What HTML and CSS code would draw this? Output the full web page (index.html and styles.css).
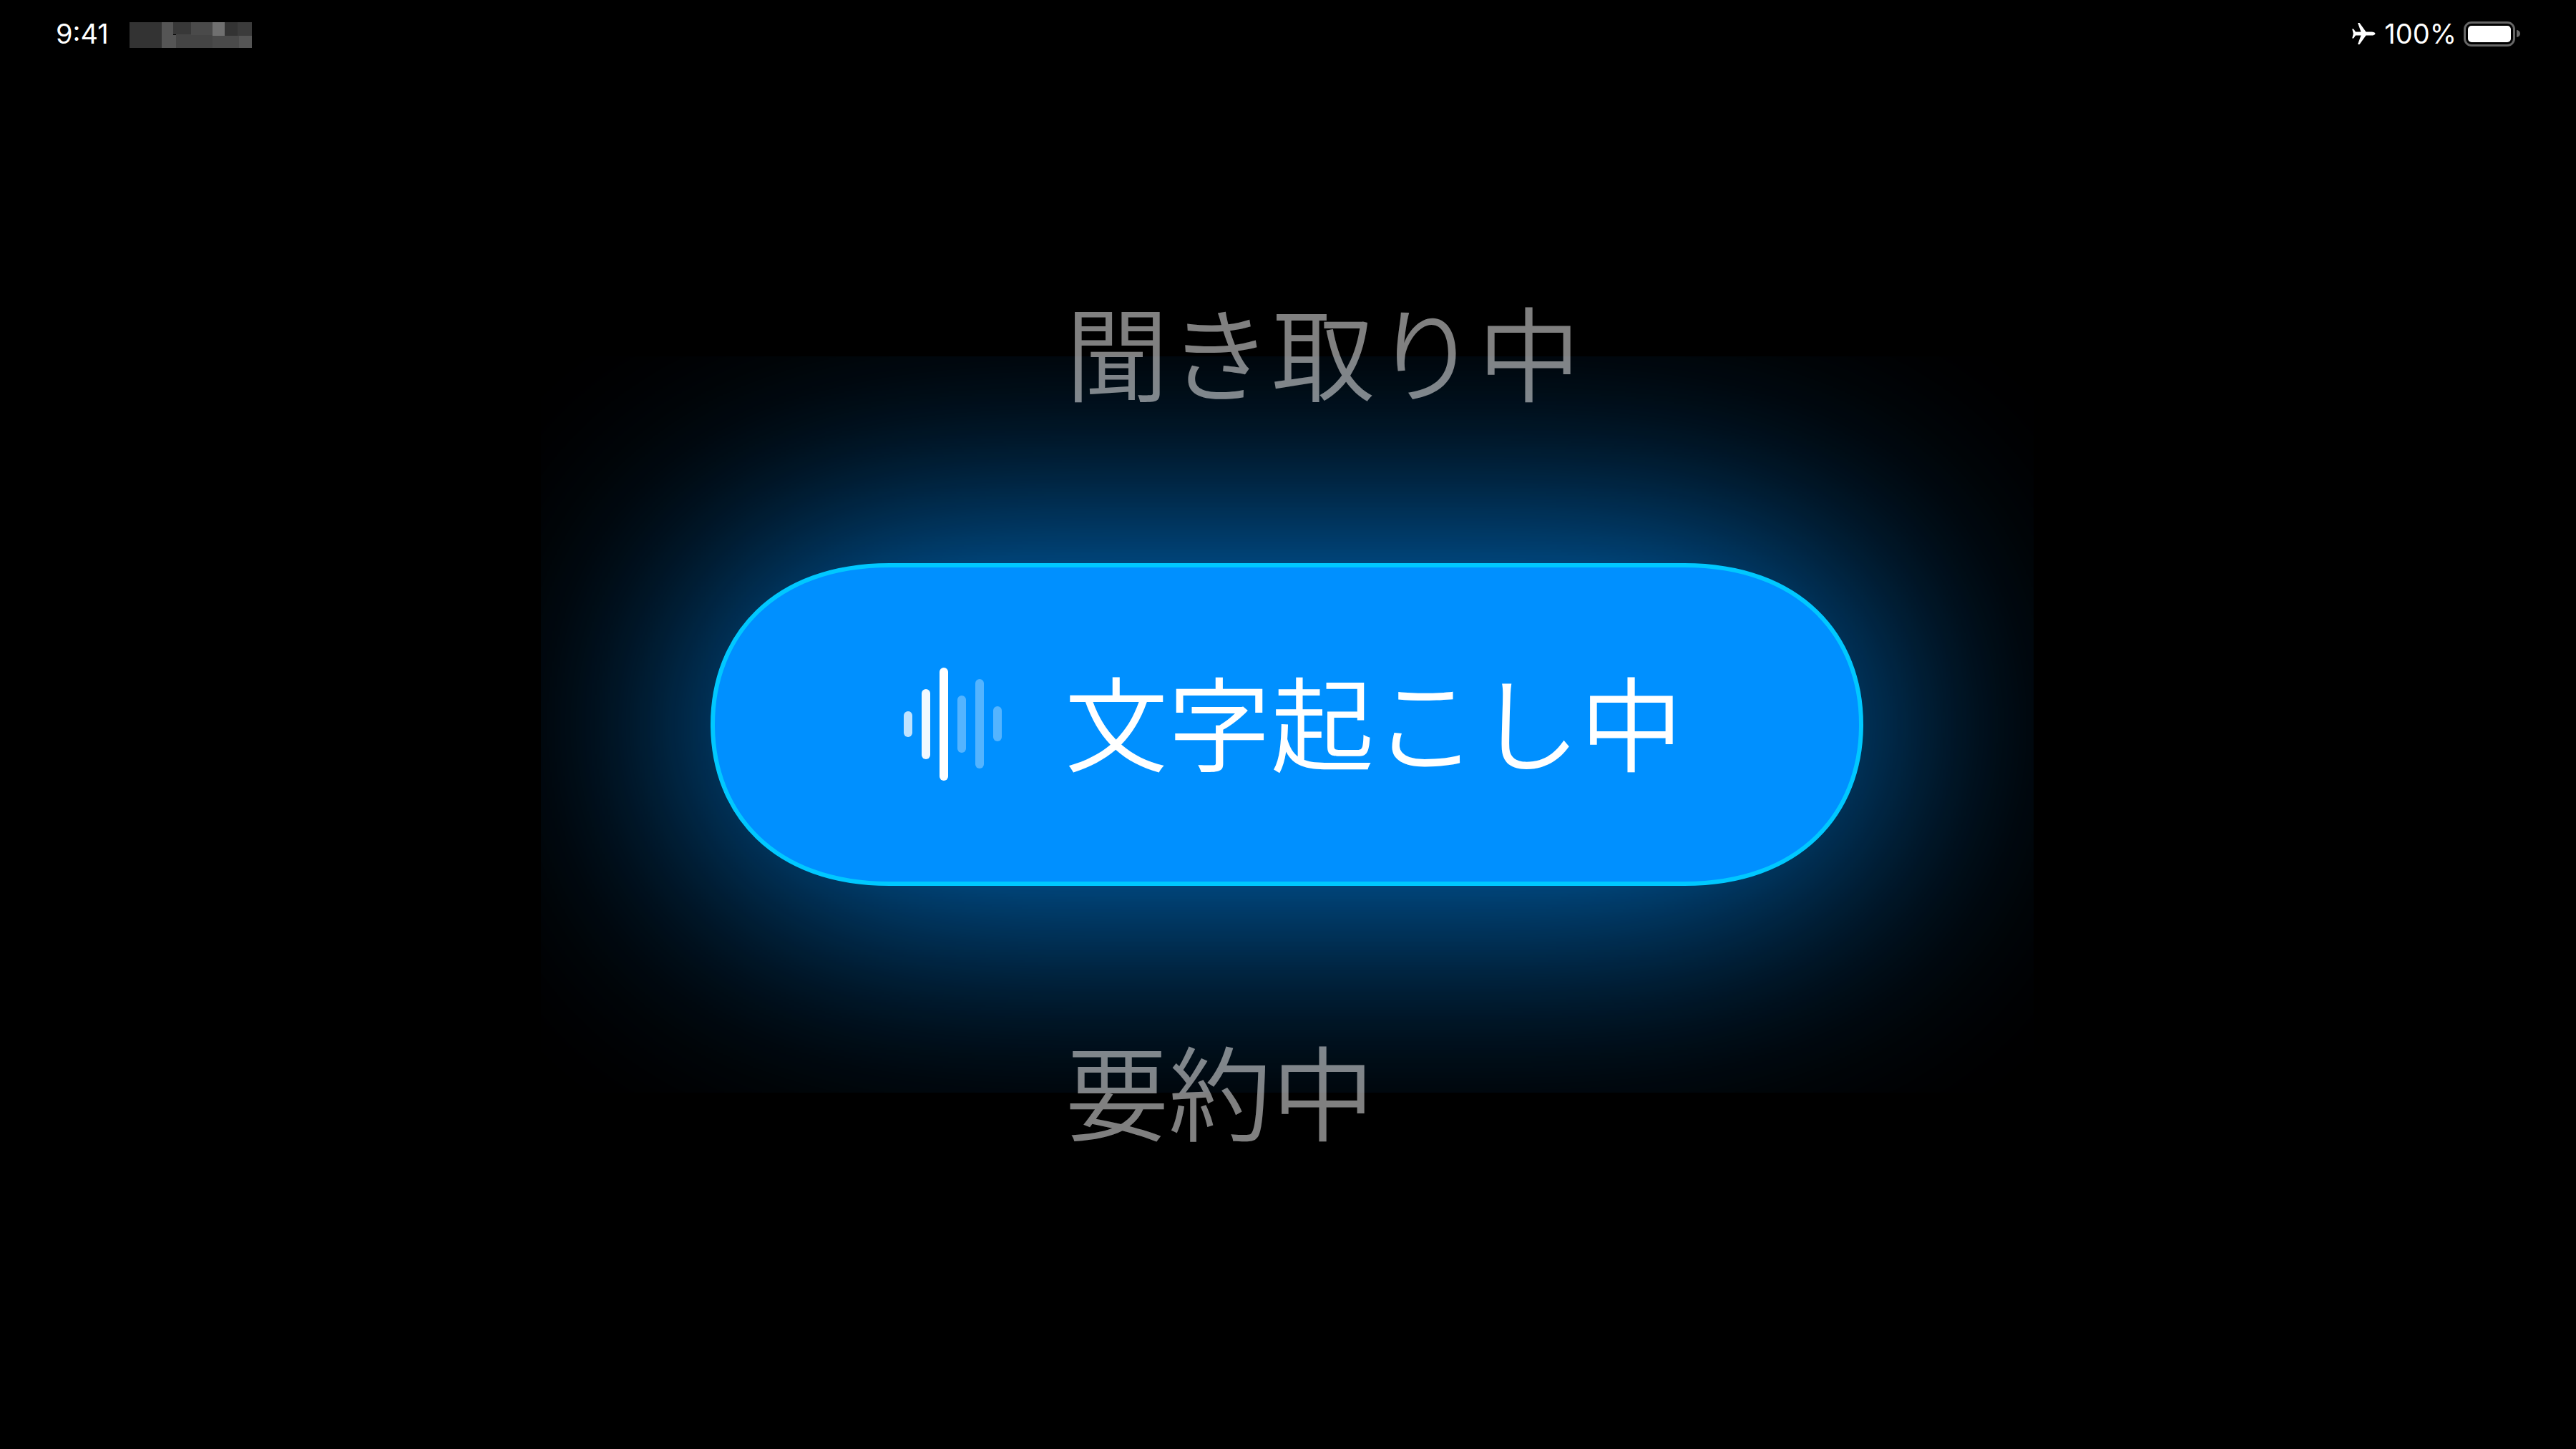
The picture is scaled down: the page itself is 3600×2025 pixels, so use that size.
FILE: index.html
```html
<!DOCTYPE html>
<html lang="ja">
<head>
<meta charset="utf-8">
<title>文字起こし中</title>
<link rel="stylesheet" href="styles.css">
</head>
<body>
<div class="screen">
  <header class="statusbar">
    <div class="status-left">
      <span class="time">9:41</span>
      <svg class="redacted" viewBox="0 0 171 36" aria-hidden="true">
        <rect x="0" y="0" width="45" height="36" fill="#333"/>
        <rect x="45" y="0" width="16" height="18" fill="#555"/>
        <rect x="61" y="0" width="25" height="17" fill="#383838"/>
        <rect x="86" y="0" width="30" height="18" fill="#4a4a4a"/>
        <rect x="116" y="0" width="17" height="19" fill="#707070"/>
        <rect x="133" y="0" width="18" height="19" fill="#333"/>
        <rect x="151" y="0" width="20" height="19" fill="#3b3b3b"/>
        <rect x="45" y="18" width="20" height="18" fill="#555"/>
        <rect x="65" y="17" width="21" height="19" fill="#444"/>
        <rect x="86" y="18" width="30" height="18" fill="#444"/>
        <rect x="116" y="19" width="37" height="17" fill="#4a4a4a"/>
        <rect x="153" y="19" width="18" height="17" fill="#555"/>
      </svg>
    </div>
    <div class="status-right">
      <svg class="plane" viewBox="0 0 34 30" aria-hidden="true">
        <path d="M33.500 15c0-1.400-2.500-2.600-5-2.600h-8L11.500 0H9l4.500 12.400H6L3.200 8.400H1.200L2.800 15 1.200 21.600h2L6 17.600h7.500L9 30h2.500l9-12.400h8c2.500 0 5-1.200 5-2.600z"/>
      </svg>
      <span class="percent">100%</span>
      <div class="battery"><div class="battery-fill"></div></div>
      <div class="battery-nub"></div>
    </div>
  </header>

  <main class="stage">
    <div class="glow-clip"><div class="glow-shape"></div></div>
    <div class="steps">
      <p class="step">聞き取り中</p>
      <div class="pill">
        <svg class="pill-bg" viewBox="0 0 1611 451" aria-hidden="true">
          <path d="M3 225.500C3 102 88 3 250 3H1361C1523 3 1608 102 1608 225.500C1608 349 1523 448 1361 448H250C88 448 3 349 3 225.500Z"/>
        </svg>
        <svg class="wave" viewBox="0 0 138 160" aria-hidden="true">
          <rect class="bar b1" x="0" y="61" width="12" height="36" rx="6"/>
          <rect class="bar b2" x="25" y="30" width="12" height="98" rx="6"/>
          <rect class="bar b3" x="50" y="0" width="12" height="158" rx="6"/>
          <rect class="bar b4" x="75" y="39" width="12" height="80" rx="6"/>
          <rect class="bar b4" x="100" y="16" width="12" height="125" rx="6"/>
          <rect class="bar b4" x="125" y="54" width="12" height="49" rx="6"/>
        </svg>
        <span class="pill-label">文字起こし中</span>
      </div>
      <p class="step">要約中</p>
    </div>
  </main>
</div>
</body>
</html>
```
FILE: styles.css
```css
html, body {
  margin: 0;
  padding: 0;
  background: #000;
}

.screen {
  position: relative;
  width: 3600px;
  height: 2025px;
  overflow: hidden;
  background: #000;
  font-family: "Noto Sans CJK JP", "Noto Sans", sans-serif;
}

.statusbar {
  display: flex;
  justify-content: space-between;
  align-items: center;
  height: 94px;
  padding: 0 78px 0 78px;
  box-sizing: border-box;
  color: #fff;
  font-family: Inter, "Liberation Sans", sans-serif;
  font-size: 38px;
}

.status-left,
.status-right {
  display: flex;
  align-items: center;
}

.time {
  width: 103px;
}

.redacted {
  display: block;
  width: 171px;
  height: 36px;
  margin-top: 4px;
}

.plane {
  display: block;
  width: 34px;
  height: 30px;
  fill: #fff;
  margin-right: 12px;
}

.percent {
  margin-right: 10px;
}

.battery {
  box-sizing: border-box;
  width: 72px;
  height: 35px;
  padding: 3px;
  border: 3px solid #666;
  border-radius: 11px;
}

.battery-fill {
  height: 100%;
  background: #fff;
  border-radius: 5px;
}

.battery-nub {
  width: 5px;
  height: 10px;
  margin-left: 2px;
  background: #666;
  border-radius: 0 5px 5px 0;
}

.stage {
  position: relative;
  padding-top: 4px;
}

.glow-clip {
  position: absolute;
  left: 756px;
  top: 404px;
  width: 2086px;
  height: 1029px;
  overflow: hidden;
}

.glow-shape {
  position: absolute;
  left: 217px;
  top: 269px;
  width: 1651px;
  height: 491px;
  border-radius: 245px;
  background: #0090ff;
  opacity: 0.88;
  filter: blur(185px);
}

.steps {
  position: relative;
  display: flex;
  flex-direction: column;
  width: 1611px;
  margin-left: 993px;
  padding-top: 300px;
}

.step {
  margin: 0;
  padding-left: 496px;
  font-size: 144px;
  line-height: 180px;
  font-weight: 350;
  color: rgba(255, 255, 255, 0.5);
}

.pill {
  position: relative;
  display: flex;
  align-items: center;
  box-sizing: border-box;
  height: 451px;
  margin: 209px 0 193px;
  padding-left: 270px;
}

.pill-bg {
  position: absolute;
  inset: 0;
  width: 100%;
  height: 100%;
  fill: #0090ff;
  stroke: #00c8ff;
  stroke-width: 6;
}

.wave {
  position: relative;
  display: block;
  width: 138px;
  height: 160px;
  fill: #fff;
  margin-right: 87px;
}

.bar.b1 { opacity: 0.75; }
.bar.b2 { opacity: 0.95; }
.bar.b3 { opacity: 1; }
.bar.b4 { opacity: 0.33; }

.pill-label {
  position: relative;
  margin-bottom: 15px;
  font-size: 144px;
  line-height: 1;
  font-weight: 350;
  color: #fff;
}
```
